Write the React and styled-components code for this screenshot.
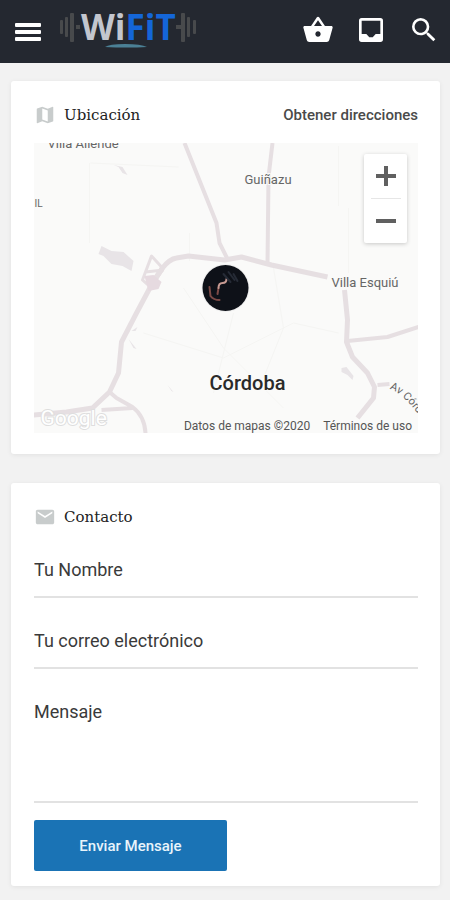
import styled, { createGlobalStyle } from 'styled-components'
import { MdShoppingBasket, MdSearch, MdMap, MdEmail } from 'react-icons/md'

const GlobalStyle = createGlobalStyle`
* {
  box-sizing: border-box;
}
body {
  margin: 0;
  background: #f2f2f2;
  color: #333;
  font-family: Roboto, "Liberation Sans", sans-serif;
}
`;
const Header = styled.header`
display: flex;
align-items: center;
height: 63px;
padding: 0 10px;
background: #242830;
`;
const IconButton = styled.button`
display: flex;
padding: 0;
border: none;
background: none;
color: white;
font-size: ${props => props.$size || 32}px;
cursor: pointer;
`;
const LogoLink = styled.a`
display: flex;
margin: 0 auto 8px 14px;
svg {
  overflow: visible;
}
`;
const Actions = styled.div`
display: flex;
align-items: center;
gap: 21px;
padding-bottom: 4px;
`;
const Main = styled.main`
display: flex;
flex-direction: column;
gap: 29px;
padding: 18px 10px 14px 11px;
`;
const Card = styled.section`
padding: 22px 22px ${props => props.$bottom || 21}px 23px;
background: white;
border-radius: 3px;
box-shadow: 0 1px 5px rgba(0, 0, 0, 0.07);
`;
const CardHead = styled.div`
display: flex;
align-items: center;
justify-content: space-between;
height: 24px;
`;
const Title = styled.h2`
display: flex;
align-items: center;
gap: 8px;
margin: 0;
font-family: "DejaVu Serif", serif;
font-size: 15px;
font-weight: 400;
color: #222;
svg {
  font-size: 22px;
  color: #c8cccc;
}
`;
const Directions = styled.a`
font-size: 15px;
font-weight: 500;
color: #4a4a4a;
text-decoration: none;
`;
const MapBox = styled.div`
position: relative;
height: 290px;
margin-top: 16px;
overflow: hidden;
background: #fafaf9;
`;
const MapDrawing = styled.svg`
display: block;
width: 100%;
height: 100%;
font-family: Roboto, sans-serif;
`;
const Zoom = styled.div`
position: absolute;
top: 11px;
right: 11px;
display: flex;
flex-direction: column;
align-items: center;
width: 43px;
background: white;
border-radius: 2px;
box-shadow: 0 1px 4px rgba(0, 0, 0, 0.2);
`;
const ZoomButton = styled.button`
display: flex;
align-items: center;
justify-content: center;
width: 100%;
height: 44px;
padding: 0;
border: none;
background: none;
color: #606060;
cursor: pointer;
`;
const ZoomLine = styled.div`
width: 30px;
height: 1px;
background: #e6e6e6;
`;
const MapFooter = styled.div`
position: absolute;
right: 6px;
bottom: 0;
display: flex;
gap: 13px;
font-size: 12px;
line-height: 14px;
color: #555;
a {
  color: inherit;
  text-decoration: none;
}
`;
const Form = styled.form`
display: flex;
flex-direction: column;
align-items: flex-start;
margin-top: 13px;
`;
const field = `
display: block;
width: 100%;
padding: 0;
border: none;
border-bottom: 2px solid #e2e2e2;
border-radius: 0;
outline: none;
background: none;
font-family: inherit;
font-size: 18px;
line-height: 24px;
color: #333;
resize: none;
&::placeholder {
  color: #3a3a3a;
  opacity: 1;
}
`;
const Input = styled.input`
${field}
height: 56px;
margin-bottom: 15px;
`;
const TextArea = styled.textarea`
${field}
height: 119px;
padding-top: 16px;
`;
const Submit = styled.button`
width: 193px;
height: 51px;
margin-top: 17px;
border: none;
border-radius: 2px;
background: #1a73b5;
color: #e8f4fb;
font-family: inherit;
font-size: 15px;
font-weight: 500;
cursor: pointer;
`;

const MenuIcon = () => (
  <svg width="36" height="36" viewBox="0 0 36 36" fill="currentColor">
    <rect x="5" y="9" width="26" height="4" rx="1" />
    <rect x="5" y="16" width="26" height="4" rx="1" />
    <rect x="5" y="23" width="26" height="4" rx="1" />
  </svg>
)

const InboxIcon = () => (
  <svg width="1em" height="1em" viewBox="0 0 24 24" fill="currentColor" fillRule="evenodd">
    <path d="M5 3h14a2 2 0 0 1 2 2v14a2 2 0 0 1-2 2H5a2 2 0 0 1-2-2V5a2 2 0 0 1 2-2zM5 5v10h3.500l2.200 2.500h2.600l2.200-2.500H19V5z" />
  </svg>
)

const Logo = () => (
  <svg width="138" height="40" viewBox="0 0 138 40" role="img" aria-label="WiFiT">
    <g fill="#484a4c">
      <rect x="0" y="12" width="3" height="14" rx="1" />
      <rect x="5" y="9" width="3" height="20" rx="1" />
      <rect x="10" y="5" width="4" height="29" rx="1" />
      <rect x="16" y="17" width="4" height="4" />
      <rect x="116" y="17" width="5" height="4" />
      <rect x="121" y="5" width="4" height="29" rx="1" />
      <rect x="127" y="9" width="3" height="20" rx="1" />
      <rect x="133" y="12" width="3" height="14" rx="1" />
    </g>
    <text x="21" y="32" fontFamily="Open Sans, sans-serif" fontSize="35" fontWeight="700" fill="#c3c6ce">
      Wi<tspan fill="#1466d8">FiT</tspan>
    </text>
    <path d="M45 39q4-3 20-3t22 3q-20 1-42 0z" fill="#4b8095" />
  </svg>
)

const CityMap = () => (
  <MapDrawing viewBox="0 0 385 290" preserveAspectRatio="xMidYMid slice" role="img" aria-label="Mapa de Córdoba">
    <rect x="-400" width="1200" height="290" fill="#fafaf9" />
    <g fill="none" stroke="#f5f5f3" strokeWidth="1">
      <path d="M56 20v80M57 20L145 24M156 90v28M305 3v60M315 65v65M110 190l80 25 70-35 45 10M150 145l40 60 60 60M200 170l-20 80M240 125l10 60-20 50" />
    </g>
    <g fill="#e8e4e7">
      <path d="M80 22l9 2 5 8-5-2-4-6z" />
      <path d="M68 103l10 5 12 1 10 9-2 10-9-5-11-2-8-8-5-2z" />
      <path d="M308 225l5-1 7 9-1 4-5-5-6-3z" />
      <path d="M98 188l6-4-2 4zM95 196l8 10-3-1zM134 242l6 7-2-1z" />
    </g>
    <g fill="none" stroke="#e6dfe2" strokeWidth="4" strokeLinejoin="round">
      <path d="M151 0L183 80L186 100L194 116" />
      <path d="M239 0L235 34L234 121" />
      <path d="M119 140L129 125Q136 116 143 115L155 113L191 117L208 114L238 122L294 134" strokeWidth="5" />
      <path d="M129 125L119 140L103 170L88 199L85 230L76 249L59 265L33 269L0 272" strokeWidth="5" />
      <path d="M76 249L83 255L99 264Q111 273 112 290M68 267L99 265" />
      <path d="M129 125L118 113L109 137L119 146M112 129L130 127" strokeWidth="3" />
      <path d="M311 147L314 177L313 199L319 214L334 230L341 244L340 255L324 275" strokeWidth="5" />
      <path d="M314 198L354 194L385 184M344 242L356 241" />
    </g>
    <path d="M111 133l9-1 8 7-3 7-10 2z" fill="#e6dae0" />
    <g fill="#666" stroke="#fafaf9" strokeWidth="2" paintOrder="stroke" fontSize="13">
      <text x="14" y="5">Villa Allende</text>
      <text x="1" y="64" fontSize="10">IL</text>
      <text x="211" y="41">Guiñazu</text>
      <text x="298" y="144">Villa Esquiú</text>
      <text fontSize="11">
        <textPath href="#avenue">Av Córd</textPath>
      </text>
      <text x="176" y="247" fontSize="20" fontWeight="500" fill="#2a2a2a">Córdoba</text>
    </g>
    <path id="avenue" d="M356 246Q370 250 388 276" fill="none" />
    <text x="7" y="282" fontSize="21" fill="#fff" stroke="#dedede" strokeWidth="2" paintOrder="stroke">Google</text>
    <circle cx="192" cy="145" r="24" fill="#efefef" />
    <circle cx="192" cy="145" r="23" fill="#0e1118" />
    <g fill="none" strokeLinecap="round">
      <path d="M176 144l1 9q3 4 9 4M184 151l1-6" stroke="#7c4a46" strokeWidth="2" />
      <path d="M185 145q0-5 4-5t4-4" stroke="#c79a92" strokeWidth="2" />
      <path d="M190 131l7 8M195 129l6 8M200 131l4 7" stroke="#262b36" strokeWidth="2" />
    </g>
  </MapDrawing>
)

const App = () => {
  return (
    <>
      <GlobalStyle />
      <Header>
        <IconButton $size={36} aria-label="Menú"><MenuIcon /></IconButton>
        <LogoLink href="#"><Logo /></LogoLink>
        <Actions>
          <IconButton aria-label="Carrito"><MdShoppingBasket /></IconButton>
          <IconButton aria-label="Bandeja"><InboxIcon /></IconButton>
          <IconButton aria-label="Buscar"><MdSearch /></IconButton>
        </Actions>
      </Header>
      <Main>
        <Card>
          <CardHead>
            <Title><MdMap />Ubicación</Title>
            <Directions href="#">Obtener direcciones</Directions>
          </CardHead>
          <MapBox>
            <CityMap />
            <Zoom>
              <ZoomButton aria-label="Acercar">
                <svg width="20" height="20" fill="currentColor"><path d="M8 0h4v8h8v4h-8v8H8v-8H0V8h8z" /></svg>
              </ZoomButton>
              <ZoomLine />
              <ZoomButton aria-label="Alejar">
                <svg width="20" height="20" fill="currentColor"><path d="M0 8h20v4H0z" /></svg>
              </ZoomButton>
            </Zoom>
            <MapFooter>
              <span>Datos de mapas ©2020</span>
              <a href="#">Términos de uso</a>
            </MapFooter>
          </MapBox>
        </Card>
        <Card $bottom={15}>
          <CardHead>
            <Title><MdEmail />Contacto</Title>
          </CardHead>
          <Form>
            <Input type="text" placeholder="Tu Nombre" aria-label="Tu Nombre" />
            <Input type="email" placeholder="Tu correo electrónico" aria-label="Tu correo electrónico" />
            <TextArea placeholder="Mensaje" aria-label="Mensaje" />
            <Submit type="button">Enviar Mensaje</Submit>
          </Form>
        </Card>
      </Main>
    </>
  )
}

export default App
